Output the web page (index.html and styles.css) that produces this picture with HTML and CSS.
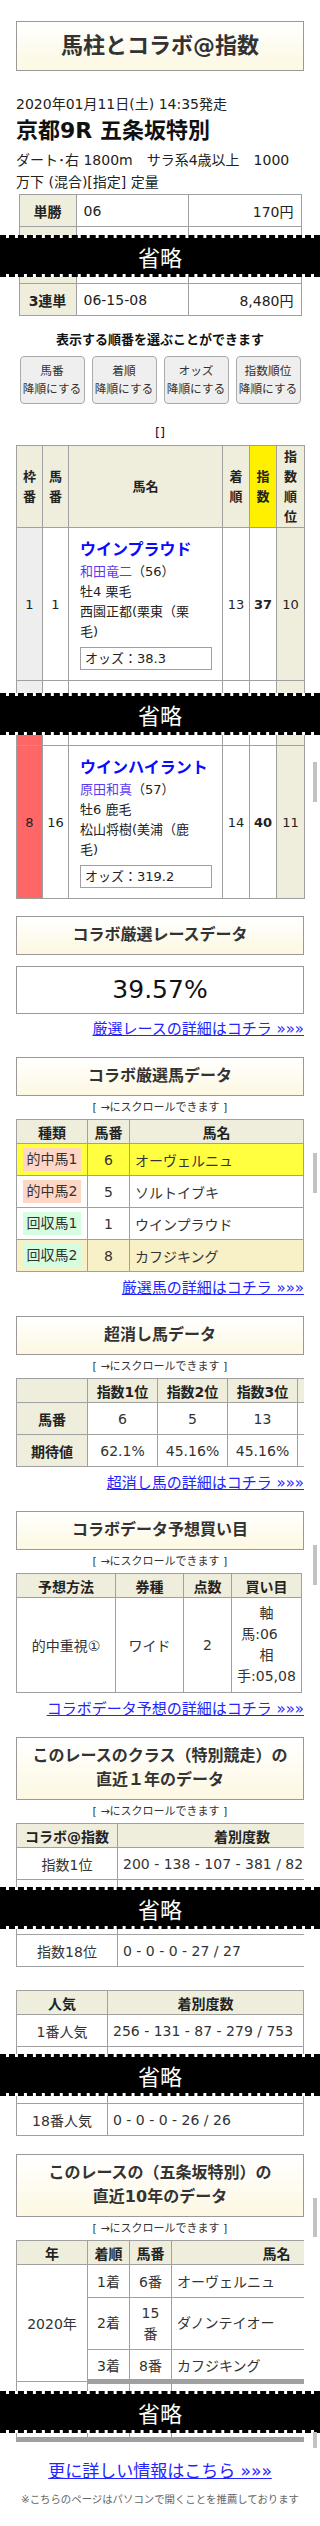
FILE: index.html
```html
<!DOCTYPE html>
<html lang="ja">
<head>
<meta charset="utf-8">
<title>馬柱とコラボ@指数</title>
<link rel="stylesheet" href="styles.css">
</head>
<body>
<div class="page">
  <h1 class="site-title">馬柱とコラボ@指数</h1>
  <p class="race-date">2020年01月11日(土) 14:35発走</p>
  <h2 class="race-name">京都9R 五条坂特別</h2>
  <p class="race-cond">ダート･右 1800m　サラ系4歳以上　1000<br>万下 (混合)[指定] 定量</p>

  <div class="pay">
    <table class="pay-table">
      <colgroup><col class="pc1"><col class="pc2"><col class="pc3"></colgroup>
      <tr><th>単勝</th><td>06</td><td class="yen">170円</td></tr>
      <tr class="sliver cut-end h8"><th></th><td></td><td></td></tr>
    </table>
    <div class="omit">省略</div>
    <table class="pay-table">
      <colgroup><col class="pc1"><col class="pc2"><col class="pc3"></colgroup>
      <tr class="sliver cut-start h7"><th></th><td></td><td></td></tr>
      <tr><th>3連単</th><td>06-15-08</td><td class="yen">8,480円</td></tr>
    </table>
  </div>

  <p class="sort-label">表示する順番を選ぶことができます</p>
  <div class="sort-btns">
    <button class="sort-btn">馬番<br>降順にする</button>
    <button class="sort-btn">着順<br>降順にする</button>
    <button class="sort-btn">オッズ<br>降順にする</button>
    <button class="sort-btn">指数順位<br>降順にする</button>
  </div>

  <p class="brackets">[]</p>

  <table class="horse-table">
    <colgroup><col class="hc-w"><col class="hc-u"><col class="hc-n"><col class="hc-r"><col class="hc-i"><col class="hc-k"></colgroup>
    <tr class="head">
      <th>枠<br>番</th><th>馬<br>番</th><th>馬名</th><th>着<br>順</th><th class="idx-h">指<br>数</th><th>指<br>数<br>順<br>位</th>
    </tr>
    <tr>
      <td class="waku w1">1</td><td>1</td>
      <td class="name-cell">
        <div class="horse">ウインプラウド</div>
        <div class="line"><span class="jockey">和田竜二</span>（56）</div>
        <div class="line">牡4 栗毛</div>
        <div class="line">西園正都(栗東（栗<br>毛)</div>
        <div class="odds">オッズ：38.3</div>
      </td>
      <td>13</td><td class="idx">37</td><td class="rank">10</td>
    </tr>
    <tr class="sliver cut-end h12"><td class="waku w1"></td><td></td><td></td><td></td><td></td><td class="rank"></td></tr>
  </table>
  <div class="omit">省略</div>
  <table class="horse-table">
    <colgroup><col class="hc-w"><col class="hc-u"><col class="hc-n"><col class="hc-r"><col class="hc-i"><col class="hc-k"></colgroup>
    <tr class="sliver cut-start h11"><td class="waku w8"></td><td></td><td></td><td></td><td></td><td class="rank"></td></tr>
    <tr>
      <td class="waku w8">8</td><td>16</td>
      <td class="name-cell">
        <div class="horse">ウインハイラント</div>
        <div class="line"><span class="jockey">原田和真</span>（57）</div>
        <div class="line">牡6 鹿毛</div>
        <div class="line">松山将樹(美浦（鹿<br>毛)</div>
        <div class="odds">オッズ：319.2</div>
      </td>
      <td>14</td><td class="idx">40</td><td class="rank">11</td>
    </tr>
  </table>

  <section class="sec sec-first">
    <h3 class="sec-title">コラボ厳選レースデータ</h3>
    <div class="pct">39.57%</div>
    <p class="more"><a href="#">厳選レースの詳細はコチラ »»»</a></p>
  </section>

  <section class="sec">
    <h3 class="sec-title">コラボ厳選馬データ</h3>
    <p class="scroll-note">[ →にスクロールできます ]</p>
    <div class="scroll">
      <table class="dt">
        <colgroup><col class="w71"><col class="w42"><col></colgroup>
        <tr class="dh"><th>種類</th><th>馬番</th><th>馬名</th></tr>
        <tr class="row-hit"><td><span class="tag tag-hit">的中馬1</span></td><td>6</td><td class="left">オーヴェルニュ</td></tr>
        <tr><td><span class="tag tag-hit">的中馬2</span></td><td>5</td><td class="left">ソルトイブキ</td></tr>
        <tr><td><span class="tag tag-ret">回収馬1</span></td><td>1</td><td class="left">ウインプラウド</td></tr>
        <tr class="row-cream"><td><span class="tag tag-ret">回収馬2</span></td><td>8</td><td class="left">カフジキング</td></tr>
      </table>
    </div>
    <p class="more"><a href="#">厳選馬の詳細はコチラ »»»</a></p>
  </section>

  <section class="sec">
    <h3 class="sec-title">超消し馬データ</h3>
    <p class="scroll-note">[ →にスクロールできます ]</p>
    <div class="scroll">
      <table class="dt wide351">
        <colgroup><col class="w71"><col class="w70"><col class="w70"><col class="w70"><col class="w70"></colgroup>
        <tr class="dh"><th></th><th>指数1位</th><th>指数2位</th><th>指数3位</th><th></th></tr>
        <tr><th>馬番</th><td>6</td><td>5</td><td>13</td><td></td></tr>
        <tr><th>期待値</th><td>62.1%</td><td>45.16%</td><td>45.16%</td><td></td></tr>
      </table>
    </div>
    <p class="more"><a href="#">超消し馬の詳細はコチラ »»»</a></p>
  </section>

  <section class="sec">
    <h3 class="sec-title">コラボデータ予想買い目</h3>
    <p class="scroll-note">[ →にスクロールできます ]</p>
    <div class="scroll">
      <table class="dt w286">
        <colgroup><col class="w99"><col class="w68"><col class="w48"><col></colgroup>
        <tr class="dh"><th>予想方法</th><th>券種</th><th>点数</th><th>買い目</th></tr>
        <tr class="buy-row"><td>的中重視①</td><td>ワイド</td><td>2</td><td class="buy">軸<br><span class="pad">馬:06</span><br>相<br>手:05,08</td></tr>
      </table>
    </div>
    <p class="more"><a href="#">コラボデータ予想の詳細はコチラ »»»</a></p>
  </section>

  <section class="sec">
    <h3 class="sec-title">このレースのクラス（特別競走）の<br>直近１年のデータ</h3>
    <p class="scroll-note">[ →にスクロールできます ]</p>
    <div class="scroll">
      <table class="dt wide351">
        <colgroup><col class="w101"><col></colgroup>
        <tr class="dh"><th>コラボ@指数</th><th>着別度数</th></tr>
        <tr><td>指数1位</td><td class="left">200 - 138 - 107 - 381 / 826</td></tr>
        <tr class="sliver cut-end h7"><td></td><td></td></tr>
      </table>
    </div>
    <div class="omit">省略</div>
    <div class="scroll">
      <table class="dt wide351">
        <colgroup><col class="w101"><col></colgroup>
        <tr class="sliver cut-start h6"><td></td><td></td></tr>
        <tr><td>指数18位</td><td class="left">0 - 0 - 0 - 27 / 27</td></tr>
      </table>
    </div>

    <div class="scroll gap23">
      <table class="dt">
        <colgroup><col class="w91"><col></colgroup>
        <tr class="dh"><th>人気</th><th>着別度数</th></tr>
        <tr><td>1番人気</td><td class="left">256 - 131 - 87 - 279 / 753</td></tr>
        <tr class="sliver cut-end h7"><td></td><td></td></tr>
      </table>
    </div>
    <div class="omit">省略</div>
    <div class="scroll">
      <table class="dt">
        <colgroup><col class="w91"><col></colgroup>
        <tr class="sliver cut-start h8"><td></td><td></td></tr>
        <tr><td>18番人気</td><td class="left">0 - 0 - 0 - 26 / 26</td></tr>
      </table>
    </div>
  </section>

  <section class="sec">
    <h3 class="sec-title">このレースの（五条坂特別）の<br>直近10年のデータ</h3>
    <p class="scroll-note">[ →にスクロールできます ]</p>
    <div class="scroll">
      <table class="dt wide366">
        <colgroup><col class="w71"><col class="w42"><col class="w42"><col></colgroup>
        <tr class="dh"><th>年</th><th>着順</th><th>馬番</th><th>馬名</th></tr>
        <tr class="r33"><td rowspan="3" class="year">2020年</td><td>1着</td><td>6番</td><td class="left">オーヴェルニュ</td></tr>
        <tr class="r52"><td>2着</td><td>15<br>番</td><td class="left">ダノンテイオー</td></tr>
        <tr class="group-end"><td>3着</td><td>8番</td><td class="left">カフジキング</td></tr>
        <tr class="sliver cut-end h9"><td></td><td></td><td></td><td></td></tr>
      </table>
    </div>
    <div class="omit">省略</div>
    <div class="scroll">
      <table class="dt wide366">
        <colgroup><col class="w71"><col class="w42"><col class="w42"><col></colgroup>
        <tr class="sliver cut-start group-end h7"><td></td><td></td><td></td><td></td></tr>
      </table>
    </div>
  </section>

  <p class="more-all"><a href="#">更に詳しい情報はこちら »»»</a></p>
  <p class="footnote">※こちらのページはパソコンで開くことを推薦しております</p>

  <span class="thumb t1"></span>
  <span class="thumb t2"></span>
  <span class="thumb t3"></span>
  <span class="thumb t4"></span>
  <span class="thumb t5"></span>
</div>
</body>
</html>
```

FILE: styles.css
```css
* { box-sizing: border-box; }
html, body { margin: 0; padding: 0; background: #fff; }
body {
  font-family: "DejaVu Sans", "Noto Sans CJK JP", sans-serif;
  font-size: 14px;
  color: #222;
}
.page {
  position: relative;
  width: 320px;
  height: 2526px;
  padding: 21px 16px 0;
  overflow: hidden;
}
p, h1, h2, h3 { margin: 0; }

.site-title {
  height: 50px;
  border: 1px solid #999;
  background: linear-gradient(#fff, #fdf8e2);
  text-align: center;
  font-size: 22px;
  line-height: 48px;
  font-weight: bold;
  color: #333;
}
.race-date { margin-top: 23px; line-height: 20px; font-size: 14px; }
.race-name { margin-top: 2px; font-size: 22px; line-height: 30px; font-weight: bold; color: #111; }
.race-cond { margin-top: 3px; font-size: 14px; line-height: 22px; }

/* payout */
.pay { margin-top: 1px; }
.pay-table { width: 282px; margin: 0 auto; border-collapse: collapse; table-layout: fixed; }
.pc1 { width: 57px; }
.pc2 { width: 112px; }
.pc3 { width: 113px; }
.pay-table th, .pay-table td { border: 1px solid #a0a0a0; height: 32px; padding: 0 7px; font-size: 14px; }
.pay-table th { background: #efeedc; text-align: center; font-weight: bold; color: #222; }
.pay-table .yen { text-align: right; }

.sliver th, .sliver td { padding: 0 !important; font-size: 0; line-height: 0; }
.h6 th, .h6 td { height: 6px !important; }
.h7 th, .h7 td { height: 7px !important; }
.h8 th, .h8 td { height: 8px !important; }
.h9 th, .h9 td { height: 9px !important; }
.h11 th, .h11 td { height: 11px !important; }
.h12 th, .h12 td { height: 12px !important; }
.cut-end th, .cut-end td { border-bottom: 0 !important; }
.cut-start th, .cut-start td { border-top: 0 !important; }

.omit {
  margin: 0 -16px;
  height: 42px;
  background: #000;
  background-clip: padding-box;
  border-top: 3px dashed #000;
  border-bottom: 3px dashed #000;
  color: #fff;
  font-size: 22px;
  display: flex;
  align-items: center;
  justify-content: center;
  font-family: "Noto Sans CJK JP", sans-serif;
}

/* sort */
.sort-label { margin-top: 14px; text-align: center; font-size: 13px; line-height: 20px; font-weight: bold; color: #111; }
.sort-btns { margin-top: 6px; display: flex; justify-content: center; gap: 7px; }
.sort-btn {
  width: 65px; height: 48px; padding: 0;
  background: #efefef; border: 1px solid #aaa; border-radius: 4px;
  font-family: "DejaVu Sans", "Noto Sans CJK JP", sans-serif;
  font-size: 11.7px; line-height: 18px; color: #333;
}
.brackets { margin-top: 19px; text-align: center; line-height: 20px; font-size: 13px; color: #303; }

/* horse table */
.horse-table { width: 288px; border-collapse: collapse; table-layout: fixed; margin-top: 2px; }
.horse-table + .omit + .horse-table { margin-top: 0; }
.hc-w { width: 26px; } .hc-u { width: 26px; } .hc-n { width: 154px; }
.hc-r { width: 27px; } .hc-i { width: 27px; } .hc-k { width: 28px; }
.horse-table th, .horse-table td { border: 1px solid #a0a0a0; text-align: center; vertical-align: middle; padding: 0; font-size: 13px; }
.horse-table .head th { background: #efeedc; font-weight: bold; line-height: 20px; height: 82px; color: #222; }
.horse-table .head .idx-h { background: #fff000; }
.waku.w1 { background: #eee; }
.waku.w8 { background: #ff6666; }
.rank { background: #efeedc; }
.idx { font-weight: bold; font-size: 15px; }
.name-cell { text-align: left !important; padding: 10px 10px 10px 11px !important; vertical-align: top !important; }
.horse { font-size: 16px; line-height: 24px; font-weight: bold; color: #0a0aff; }
.line { font-size: 13px; line-height: 20px; }
.jockey { color: #5b3bf0; }
.odds { margin-top: 5px; height: 23px; border: 1px solid #a0a0a0; padding-left: 4px; line-height: 21px; font-size: 13px; }

/* sections */
.sec { margin-top: 18px; }
.sec-first { margin-top: 17px; }
.sec-title {
  border: 1px solid #999;
  background: linear-gradient(#fff, #fdf8e2);
  text-align: center;
  font-size: 16px;
  line-height: 24px;
  padding: 6px 0 7px;
  font-weight: bold;
  color: #333;
}
.pct { margin-top: 11px; height: 48px; border: 1px solid #999; text-align: center; font-size: 25px; line-height: 46px; color: #111; }
.more { margin-top: 6px; text-align: right; font-size: 15px; line-height: 20px; }
.sec-first .more { margin-top: 5px; }
.more a, .more-all a { color: #2424ff; text-decoration: underline; }
.scroll-note { margin-top: 4px; text-align: center; font-size: 11px; line-height: 16px; color: #333; }
.scroll { overflow: hidden; margin-top: 3px; }
.scroll + .omit + .scroll { margin-top: 0; }
.omit + .scroll { margin-top: 0; }
.gap23 { margin-top: 23px; }

.dt { width: 288px; border-collapse: collapse; table-layout: fixed; }
.dt.wide351 { width: 351px; }
.dt.wide366 { width: 366px; }
.dt.w286 { width: 286px; }
.w42 { width: 42px; } .w48 { width: 48px; } .w68 { width: 68px; } .w70 { width: 70px; }
.w71 { width: 71px; } .w91 { width: 91px; } .w99 { width: 99px; } .w101 { width: 101px; }
.dt th, .dt td { border: 1px solid #a0a0a0; height: 32px; padding: 0 5px; text-align: center; font-size: 14px; color: #333; }
.dt th { background: #efeedc; font-weight: bold; color: #222; }
.dt .dh th { height: 24px; }
.dt .left { text-align: left; }
.row-hit td { background: #ffff40; }
.row-cream td { background: #f8f1c8; }
.tag { display: inline-block; padding: 0 4px; line-height: 23px; }
.tag-hit { background: #ffd6c6; }
.tag-ret { background: #d6fde0; }
.buy-row td { height: 95px; }
.buy { line-height: 21px; padding: 0 !important; }
.buy .pad { padding-right: 14px; }
.r33 td { height: 33px; }
.r52 td { height: 52px; line-height: 21px; }
.year { vertical-align: middle; }
.group-end td { border-bottom: 5px solid #a0a0a0; }
.dt .sliver.group-end td { border-bottom: 5px solid #a0a0a0 !important; }

.more-all { margin-top: 17px; text-align: center; font-size: 17px; line-height: 24px; }
.footnote { margin-top: 8px; text-align: center; font-size: 10.4px; line-height: 16px; color: #666; }

.thumb { position: absolute; left: 313px; width: 4px; background: #c2c2c2; }
.t1 { top: 762px; height: 40px; }
.t2 { top: 1153px; height: 40px; }
.t3 { top: 1545px; height: 40px; }
.t4 { top: 2198px; height: 39px; }
.t5 { top: 2432px; height: 16px; }
```
